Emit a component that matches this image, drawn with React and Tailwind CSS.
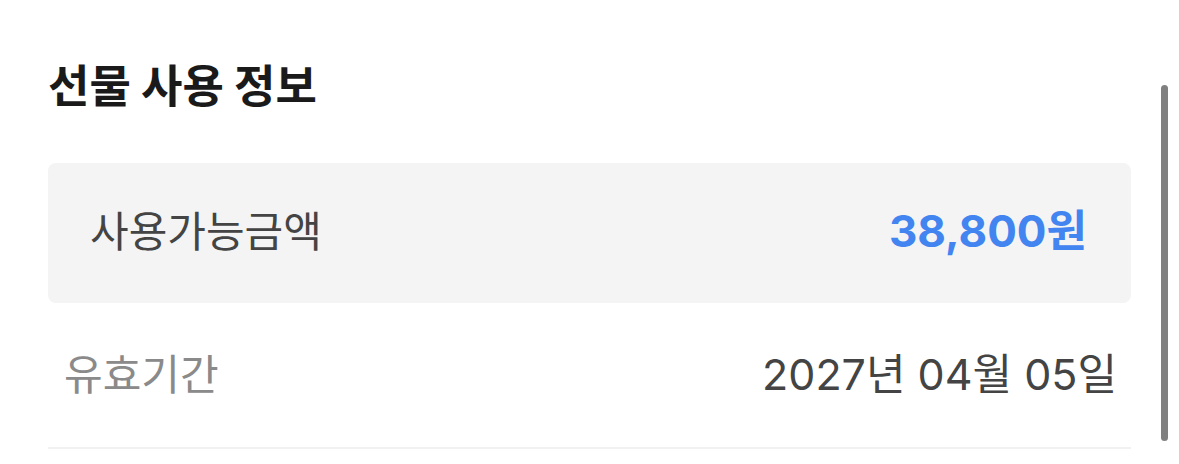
export default function App() {
  const font = { fontFamily: 'Inter, "Noto Sans CJK KR", "Noto Sans", sans-serif' };
  return (
    <div className="relative w-[1179px] h-[464px] bg-white overflow-hidden" style={font}>
      <div className="pl-[48px] pr-[48px] pt-[56px]">
        <h2 className="text-[45px] leading-[56px] font-bold text-[#1a1a1a] [font-family:'Noto_Sans_CJK_KR',sans-serif]">선물 사용 정보</h2>
        <div className="mt-[51px] rounded-[8px] bg-[#f4f4f4] h-[140px] flex items-center justify-between pl-[42px] pr-[44px] pb-[4px]">
          <span className="text-[42px] text-[#444444]">사용가능금액</span>
          <span className="text-[44px] font-bold text-[#4285f0]">38,800원</span>
        </div>
        <div className="h-[146px] flex items-center justify-between pl-[16px] pr-[14px] pb-[2px] border-b-2 border-[#f1f1f1]">
          <span className="text-[42px] text-[#8a8a8a]">유효기간</span>
          <span className="text-[43px] text-[#444444]">2027년 04월 05일</span>
        </div>
      </div>
      <div className="absolute left-[1161px] top-[85px] w-[7px] h-[356px] rounded-full bg-[#808080]" />
    </div>
  );
}
